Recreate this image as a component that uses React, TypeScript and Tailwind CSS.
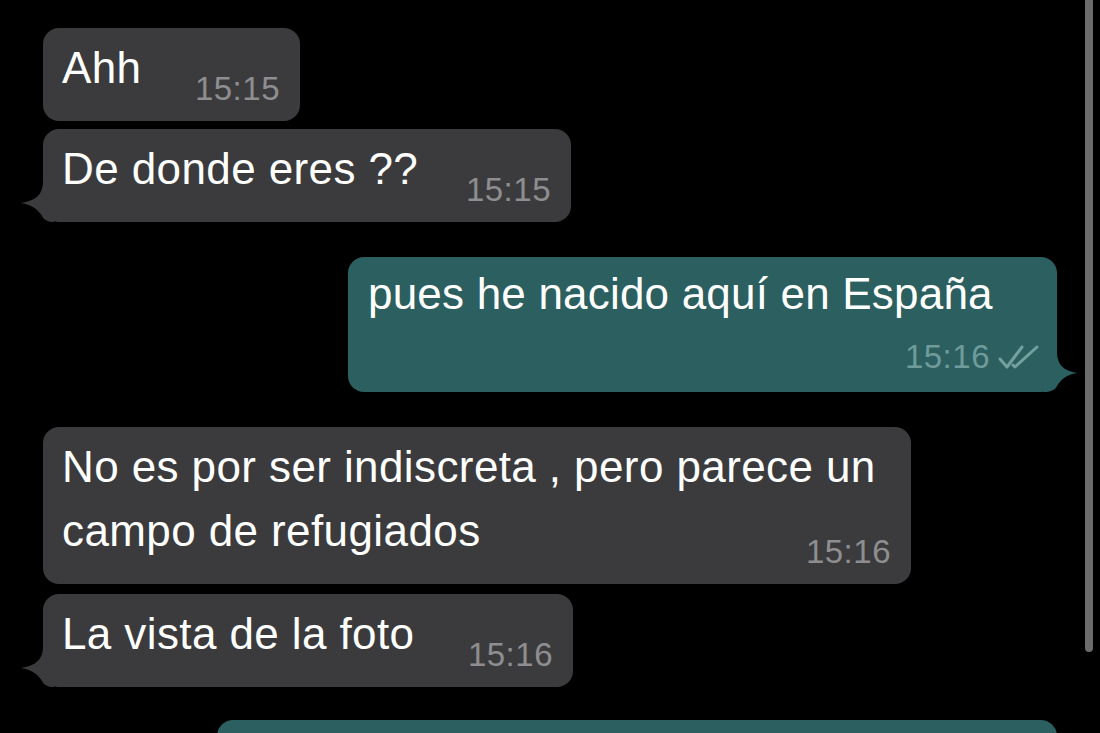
import React from 'react';

const FONT = { fontFamily: '"Liberation Sans", Arial, sans-serif' };

function TailLeft({ color }: { color: string }) {
  return (
    <svg
      className="absolute -left-[23px] bottom-0"
      width="34"
      height="40"
      viewBox="0 0 34 40"
    >
      <path
        d="M23 0 C23 12 16 19 0.5 21 C10 22 18 27 22 34 C24 38 28 40 34 40 L34 0 Z"
        fill={color}
      />
    </svg>
  );
}

function TailRight({ color }: { color: string }) {
  return (
    <svg
      className="absolute -right-[21px] bottom-0 -scale-x-100"
      width="34"
      height="40"
      viewBox="0 0 34 40"
    >
      <path
        d="M21 0 C21 12 15 19 0.5 21 C10 22 17 27 21 34 C23 38 28 40 34 40 L34 0 Z"
        fill={color}
      />
    </svg>
  );
}

interface IncomingProps {
  lines: string[];
  time: string;
  className: string;
  tail?: boolean;
}

function Incoming({ lines, time, className, tail }: IncomingProps) {
  const last = lines[lines.length - 1];
  return (
    <div
      className={`relative self-start rounded-[16px] bg-[#3b3b3d] pl-[19px] pr-[20px] pt-[8px] pb-[16px] ${className}`}
    >
      {lines.slice(0, -1).map((l) => (
        <div key={l} className="leading-[64px] whitespace-nowrap tracking-[0.4px]">
          {l}
        </div>
      ))}
      <div className="flex items-end justify-between">
        <span className="leading-[64px] mb-[5px] whitespace-nowrap tracking-[0.4px]">{last}</span>
        <span className="ml-[36px] shrink-0 text-[33px] leading-[33px] tracking-[0.5px] text-[#8e8e90]">
          {time}
        </span>
      </div>
      {tail && <TailLeft color="#3b3b3d" />}
    </div>
  );
}

function DoubleCheck() {
  return (
    <svg width="44" height="26" viewBox="0 0 44 26" fill="none">
      <path
        d="M2 15 L9 23 L24 3"
        stroke="#74a0a0"
        strokeWidth="3"
        strokeLinecap="round"
        strokeLinejoin="round"
      />
      <path
        d="M15 21 L17 23 L39 3"
        stroke="#74a0a0"
        strokeWidth="3"
        strokeLinecap="round"
        strokeLinejoin="round"
      />
    </svg>
  );
}

export default function App() {
  return (
    <div className="flex h-[733px] w-[1100px] overflow-hidden bg-black text-white text-[44px]" style={FONT}>
      <div className="flex w-[1085px] flex-col pl-[43px] pr-[28px]">
        <Incoming lines={['Ahh']} time="15:15" className="mt-[28px] w-[257px]" />
        <Incoming lines={['De donde eres ??']} time="15:15" className="mt-[8px] w-[528px]" tail />

        {/* outgoing */}
        <div className="relative mt-[35px] w-[709px] self-end rounded-[16px] bg-[#2b5f60] pl-[20px] pr-[15px] pt-[5px] pb-[19px]">
          <div className="leading-[64px] whitespace-nowrap tracking-[0.2px]">pues he nacido aquí en España</div>
          <div className="mt-[14px] flex items-center justify-end gap-[8px]">
            <span className="text-[33px] leading-[33px] tracking-[0.5px] text-[#6f9b9b]">15:16</span>
            <DoubleCheck />
          </div>
          <TailRight color="#2b5f60" />
        </div>

        <Incoming
          lines={['No es por ser indiscreta , pero parece un', 'campo de refugiados']}
          time="15:16"
          className="mt-[35px] w-[868px]"
        />
        <Incoming lines={['La vista de la foto']} time="15:16" className="mt-[10px] w-[530px]" tail />

        <div className="mt-[33px] h-[80px] w-[840px] shrink-0 self-end rounded-t-[16px] bg-[#2b5f60]" />
      </div>
      <div className="h-[652px] w-[8px] rounded-b-full bg-[#6b6b6b]" />
    </div>
  );
}
